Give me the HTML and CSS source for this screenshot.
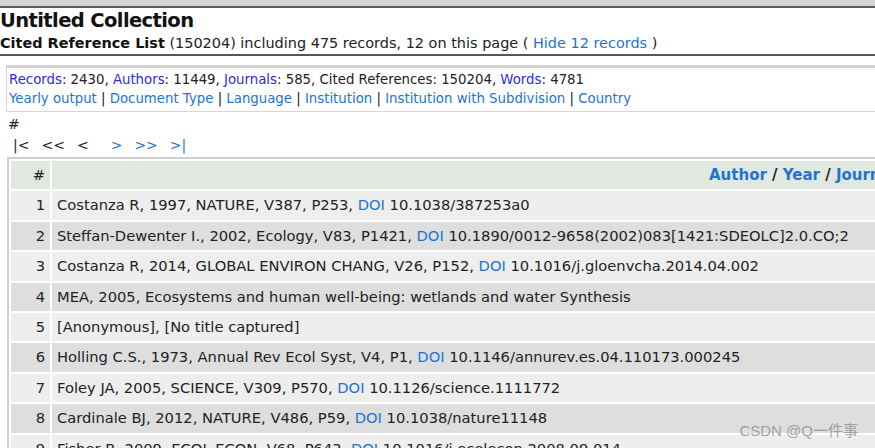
FILE: index.html
```html
<!DOCTYPE html>
<html>
<head>
<meta charset="utf-8">
<link rel="stylesheet" href="styles.css">
</head>
<body>
<div class="topbar"></div>
<div class="head">
  <h1 class="title">Untitled Collection</h1>
  <p class="sub"><b>Cited Reference List</b> (150204) including 475 records, 12 on this page ( <a class="lk">Hide 12 records</a> )</p>
</div>
<div class="stats">
  <div class="line"><a class="st">Records</a>: 2430, <a class="st">Authors</a>: 11449, <a class="st">Journals</a>: 585, Cited References: 150204, <a class="st">Words</a>: 4781</div>
  <div class="line"><a class="lk">Yearly output</a> | <a class="lk">Document Type</a> | <a class="lk">Language</a> | <a class="lk">Institution</a> | <a class="lk">Institution with Subdivision</a> | <a class="lk">Country</a></div>
</div>
<div class="hash">#</div>
<div class="pager">
  <span class="pg off">|&lt;</span>
  <span class="pg off">&lt;&lt;</span>
  <span class="pg off">&lt;</span>
  <a class="pg lk gap">&gt;</a>
  <a class="pg lk">&gt;&gt;</a>
  <a class="pg lk">&gt;|</a>
</div>
<table class="grid">
  <thead>
    <tr><th class="num">#</th><th class="ttl"><a class="lk">Author</a> / <a class="lk">Year</a> / <a class="lk">Journal</a></th></tr>
  </thead>
  <tbody>
    <tr class="odd"><td class="num">1</td><td>Costanza R, 1997, NATURE, V387, P253, <a class="lk">DOI</a> 10.1038/387253a0</td></tr>
    <tr class="even"><td class="num">2</td><td>Steffan-Dewenter I., 2002, Ecology, V83, P1421, <a class="lk">DOI</a> 10.1890/0012-9658(2002)083[1421:SDEOLC]2.0.CO;2</td></tr>
    <tr class="odd"><td class="num">3</td><td>Costanza R, 2014, GLOBAL ENVIRON CHANG, V26, P152, <a class="lk">DOI</a> 10.1016/j.gloenvcha.2014.04.002</td></tr>
    <tr class="even"><td class="num">4</td><td>MEA, 2005, Ecosystems and human well-being: wetlands and water Synthesis</td></tr>
    <tr class="odd"><td class="num">5</td><td>[Anonymous], [No title captured]</td></tr>
    <tr class="even"><td class="num">6</td><td>Holling C.S., 1973, Annual Rev Ecol Syst, V4, P1, <a class="lk">DOI</a> 10.1146/annurev.es.04.110173.000245</td></tr>
    <tr class="odd"><td class="num">7</td><td>Foley JA, 2005, SCIENCE, V309, P570, <a class="lk">DOI</a> 10.1126/science.1111772</td></tr>
    <tr class="even"><td class="num">8</td><td>Cardinale BJ, 2012, NATURE, V486, P59, <a class="lk">DOI</a> 10.1038/nature11148</td></tr>
    <tr class="odd"><td class="num">9</td><td>Fisher B, 2009, ECOL ECON, V68, P643, <a class="lk">DOI</a> 10.1016/j.ecolecon.2008.09.014</td></tr>
  </tbody>
</table>
<div class="watermark">CSDN @Q一件事</div>
</body>
</html>
```
FILE: styles.css
```css
html, body {
  margin: 0;
  padding: 0;
  overflow: hidden;
  background: #fff;
}
body {
  font-family: "DejaVu Sans", Verdana, sans-serif;
  font-size: 14px;
  color: #222;
  width: 875px;
  height: 448px;
  position: relative;
}
a { text-decoration: none; cursor: pointer; }
.lk { color: #1f74d0; }
.st { color: #2d2de0; }

.topbar {
  height: 6px;
  background: #d4d4d4;
  border-bottom: 2px solid #5a5a5a;
}
.head {
  border-bottom: 2px solid #555;
}
.title {
  margin: 0;
  font-size: 19.5px;
  letter-spacing: -0.6px;
  line-height: 25px;
  font-weight: bold;
  color: #111;
}
.sub {
  margin: 0;
  font-size: 14.45px;
  line-height: 21px;
}
.sub b { color: #111; }

.stats {
  margin: 9px 0 0 6px;
  border-top: 3px solid #d2d2d2;
  border-left: 1px solid #d6d6d6;
  border-bottom: 1px solid #d6d6d6;
  padding: 2px 0 3px 2px;
  font-size: 13.3px;
}
.stats .line {
  line-height: 19px;
  white-space: nowrap;
}
.hash {
  margin: 2px 0 0 8px;
  line-height: 20px;
}
.pager {
  margin: 1px 0 0 13px;
  line-height: 20px;
  display: flex;
  white-space: pre;
}
.pg { margin-right: 12px; }
.pg.off { color: #222; }
.pg.gap { margin-left: 10px; }

.grid {
  margin: 2px 0 0 7px;
  border: 2px solid #cfcfcf;
  border-spacing: 2px;
  width: 1100px;
  table-layout: fixed;
}
.grid th, .grid td {
  padding: 5px 5px;
  line-height: 18.4px;
  white-space: nowrap;
  text-align: left;
  font-size: 14.7px;
}
.grid th {
  background: #e1e8e1;
  font-weight: normal;
  height: 18px;
}
.grid th.ttl {
  font-weight: bold;
  padding-left: 657px;
  font-size: 15px;
}
.grid .num {
  width: 29px;
  text-align: right;
}
.grid tr.odd td { background: #eeeeee; }
.grid tr.even td { background: #dedede; }

.watermark {
  position: absolute;
  right: 17px;
  top: 419px;
  font-family: "Liberation Sans", "Noto Sans CJK SC", sans-serif;
  font-size: 15px;
  color: rgba(140, 140, 140, 0.8);
}
```
